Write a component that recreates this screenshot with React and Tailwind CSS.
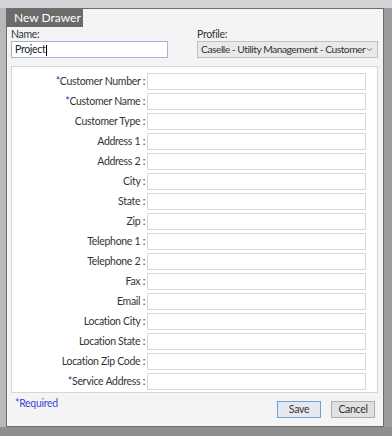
import React from "react";

const fields = [
  { label: "Customer Number", required: true },
  { label: "Customer Name", required: true },
  { label: "Customer Type" },
  { label: "Address 1" },
  { label: "Address 2" },
  { label: "City" },
  { label: "State" },
  { label: "Zip" },
  { label: "Telephone 1" },
  { label: "Telephone 2" },
  { label: "Fax" },
  { label: "Email" },
  { label: "Location City" },
  { label: "Location State" },
  { label: "Location Zip Code" },
  { label: "Service Address", required: true },
];

const App = () => {
  return (
    <div
      className="w-[392px] h-[436px] bg-[#a8a8aa] overflow-hidden tracking-[-0.3px]"
      style={{ fontFamily: 'Lato, "Noto Sans", sans-serif' }}
    >
      <div className="h-[8px] bg-[#d3d3d7]" />
      <div className="flex">
        <div className="w-[6px] h-[419px] bg-[#b9b9bb]" />
        {/* dialog */}
        <div className="w-[378px] h-[419px] border border-[#6e6e6e] bg-[#f4f4f4] flex flex-col">
          <div className="w-[76px] h-[18px] bg-[#6b6b6b] text-white text-[12px] leading-[18px] pl-[7px] tracking-normal">
            New Drawer
          </div>

          {/* name / profile */}
          <div className="flex pl-[4px] pr-[4px] mt-[1px]">
            <div className="flex flex-col w-[186px]">
              <span className="text-[10.5px] leading-[13px] h-[13px] text-[#333]">Name:</span>
              <div className="w-[157px] h-[17px] bg-white border border-[#9fb6d6] text-[10.5px] leading-[15px] text-[#222] pl-[3px]">
                Project<span className="inline-block w-[1px] h-[11px] bg-black align-middle" />
              </div>
            </div>
            <div className="flex flex-col">
              <span className="text-[10.5px] leading-[13px] h-[13px] text-[#333]">Profile:</span>
              <div className="w-[181px] h-[17px] bg-[#e9e9e9] border border-[#c2c2c2] text-[10.3px] leading-[15px] text-[#333] pl-[3px] pr-[4px] flex items-center tracking-[-0.5px]">
                <span className="whitespace-nowrap">Caselle - Utility Management - Customer</span>
                <svg width="7" height="5" viewBox="0 0 7 5" className="shrink-0 ml-auto">
                  <path d="M1 1.5 L3.5 3.5 L6 1.5" fill="none" stroke="#777" strokeWidth="1" />
                </svg>
              </div>
            </div>
          </div>

          {/* form panel */}
          <div className="ml-[4px] mt-[8px] w-[367px] h-[327px] bg-white border border-[#d6d6d6] pt-[6px] pr-[10px] flex flex-col gap-[3px]">
            {fields.map((f) => (
              <div key={f.label} className="flex items-center h-[17px]">
                <div className="w-[135px] text-right text-[10.5px] text-[#333] whitespace-nowrap pr-[2px]">
                  {f.required && <span className="text-[#2b2bbf]">*</span>}
                  {f.label} :
                </div>
                <div className="w-[219px] h-[17px] border border-[#d9d9d9] bg-white" />
              </div>
            ))}
          </div>

          {/* footer */}
          <div className="flex items-start mt-[8px] pl-[8px] pr-[8px]">
            <span className="text-[10.5px] leading-[15px] text-[#3c46d6] mt-[-5px]">*Required</span>
            <div className="ml-auto flex gap-[10px]">
              <button className="w-[44px] h-[17px] bg-[#e5e9ef] border border-[#6fa0d8] text-[10.5px] leading-[15px] text-[#333]">
                Save
              </button>
              <button className="w-[44px] h-[17px] bg-[#e1e1e1] border border-[#adadad] text-[10.5px] leading-[15px] text-[#333]">
                Cancel
              </button>
            </div>
          </div>
        </div>
        <div className="w-[8px] h-[419px] bg-[#9c9c9e]" />
      </div>
      <div className="h-[9px] bg-[#8e8e8e]" />
    </div>
  );
};

export default App;
